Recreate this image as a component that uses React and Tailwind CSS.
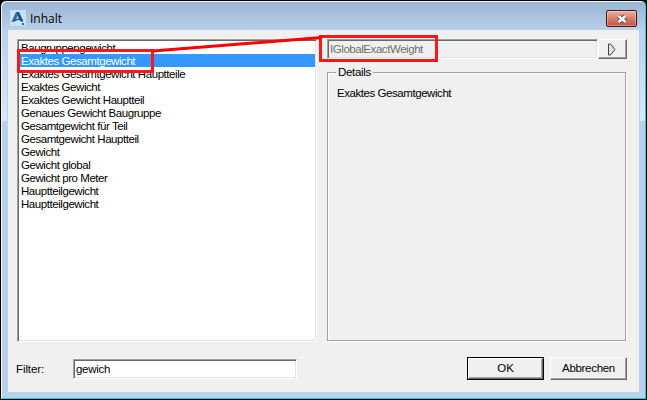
import { useState } from 'react';

const ITEMS = [
  'Baugruppengewicht',
  'Exaktes Gesamtgewicht',
  'Exaktes Gesamtgewicht Hauptteile',
  'Exaktes Gewicht',
  'Exaktes Gewicht Hauptteil',
  'Genaues Gewicht Baugruppe',
  'Gesamtgewicht für Teil',
  'Gesamtgewicht Hauptteil',
  'Gewicht',
  'Gewicht global',
  'Gewicht pro Meter',
  'Hauptteilgewicht',
  'Hauptteilgewicht',
];

const SUNKEN = 'border border-t-[#a0a0a0] border-l-[#a0a0a0] border-r-white border-b-white shadow-[inset_1px_1px_0_#696969,inset_-1px_-1px_0_#e3e3e3]';
const RAISED = 'border border-t-white border-l-white border-r-[#696969] border-b-[#696969] shadow-[inset_-1px_-1px_0_#a0a0a0]';

function AppIcon() {
  return (
    <svg width="16" height="16" viewBox="0 0 16 16">
      <rect width="16" height="16" fill="#c9dff4" />
      <path d="M6 2h3l4.500 9.500h-3L7 4.500Z" fill="#164f8c" />
      <path d="M6 2 8 5 5 11.500 1.500 12Z" fill="#2a6cab" />
      <path d="m4 10 6-2 .5 1.500-6 1.500Z" fill="#164f8c" />
      <rect x="12" y="13" width="2" height="2" fill="#2a6cab" />
    </svg>
  );
}

function TitleBar() {
  return (
    <div className="flex h-[28px] shrink-0 items-start pl-[9px] pr-[9px]">
      <div className="mt-[8px]"><AppIcon /></div>
      <span className="ml-[4px] mt-[8px] font-['Open_Sans',sans-serif] text-[12px] leading-[17px] tracking-normal">Inhalt</span>
      <button className="ml-auto mt-[8px] flex h-[17px] w-[31px] items-center justify-center rounded-[2px] border border-[#431422] bg-linear-to-b from-[#eab0a4] via-[#d98473] via-45% to-[#c4513c] shadow-[inset_0_0_0_1px_#ffffff50]">
        <svg width="12" height="10" viewBox="0 0 12 10">
          <path d="m2.500 2 7 6m0-6-7 6" stroke="#535666" strokeWidth="4.400" />
          <path d="m2.500 2 7 6m0-6-7 6" stroke="#fff" strokeWidth="2.400" />
        </svg>
      </button>
    </div>
  );
}

export default function App() {
  const [selected, setSelected] = useState(1);
  const [filter, setFilter] = useState('gewich');

  return (
    <div className="relative h-[400px] w-[647px] overflow-hidden bg-black font-['Liberation_Sans',Arial,sans-serif] text-[11.5px] leading-[13px] tracking-[-0.440px] text-black">
      <div className="flex h-[400px] w-[647px] flex-col rounded-t-[6px] border border-black bg-[#b9d1ea] bg-linear-to-b from-[#99b4d1] to-[#b9d1ea] to-[30px] shadow-[inset_1px_1px_0_#f0f7fc,inset_-1px_-1px_0_#24cbe0]">
        <div className="h-px shrink-0" />
        <TitleBar />
        <div className="flex h-[362px] justify-between px-px">
          <div className="h-[91px] w-[5px] bg-linear-to-b from-[#b9d1ea] to-[#dbe8f6]" />
          <div className="flex h-[362px] w-[631px] flex-col bg-[#f0f0f0] px-[9px] pt-[9px]">
            <div className="flex h-[303px]">
              {/* list */}
              <div className={`w-[300px] shrink-0 bg-white p-px ${SUNKEN}`}>
                {ITEMS.map((label, i) => (
                  <div
                    key={i}
                    onClick={() => setSelected(i)}
                    className={`h-[13px] pl-[2px] leading-[15px] whitespace-nowrap ${selected === i ? 'bg-[#3399ff] text-white' : ''}`}
                  >
                    {label}
                  </div>
                ))}
              </div>

              <div className="ml-[10px] flex w-[300px] flex-col">
                <div className="flex h-[20px] shrink-0">
                  <div className={`w-[271px] pl-[2px] pt-[3px] text-[#6d6d6d] ${SUNKEN}`}>IGlobalExactWeight</div>
                  <button className={`flex w-[29px] items-center justify-center pr-[3px] ${RAISED}`}>
                    <svg width="9" height="13" viewBox="0 0 9 13">
                      <path d="M1.500 1v11h2L8 6.500 3.500 1Z" fill="#dde3ea" stroke="#39434f" />
                    </svg>
                  </button>
                </div>
                <fieldset className="mt-[7px] h-[275px] w-[299px] border border-[#a0a0a0] pl-[9px] shadow-[1px_1px_0_#fff,inset_1px_1px_0_#fff]">
                  <legend className="-ml-px bg-[#f0f0f0] px-[2px] tracking-[-0.300px]">Details</legend>
                  <div className="mt-[8px]">Exaktes Gesamtgewicht</div>
                </fieldset>
              </div>
            </div>

            {/* filter + actions */}
            <div className="mt-[15px] flex h-[23px] items-start">
              <label className="-ml-px mt-[6px] w-[57px] tracking-[-0.100px]">Filter:</label>
              <input
                value={filter}
                onChange={(e) => setFilter(e.target.value)}
                className={`mt-[2px] h-[20px] w-[224px] bg-white pl-[2px] tracking-[-0.300px] outline-none ${SUNKEN}`}
              />
              <button className="ml-[170px] h-[23px] w-[77px] border border-black p-0">
                <span className={`flex h-full items-center justify-center tracking-normal ${RAISED}`}>OK</span>
              </button>
              <button className={`ml-[6px] h-[23px] w-[77px] tracking-[-0.300px] ${RAISED}`}>Abbrechen</button>
            </div>
          </div>
          <div className="h-[91px] w-[5px] bg-linear-to-b from-[#b9d1ea] to-[#dbe8f6]" />
        </div>
      </div>

      {/* callout markers */}
      <svg className="pointer-events-none absolute inset-0" width="647" height="400">
        <g fill="none" stroke="#ff1616" strokeWidth="3">
          <rect x="18.500" y="50.500" width="134" height="21" />
          <rect x="320.500" y="36.500" width="116" height="24" />
          <path d="M153 51 322 37.500" stroke="#ff0000" />
        </g>
      </svg>
    </div>
  );
}
